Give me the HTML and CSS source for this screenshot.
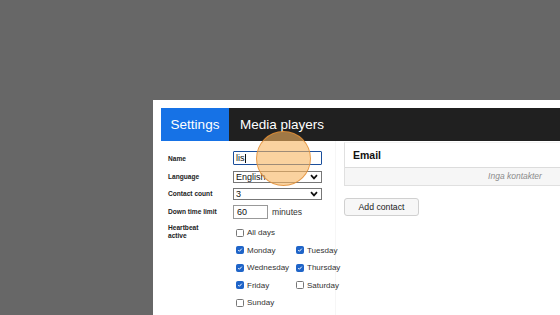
FILE: index.html
```html
<!DOCTYPE html>
<html lang="en">
<head>
  <meta charset="UTF-8" />
  <title>Media players</title>
  <link rel="stylesheet" href="styles.css">
</head>
<body>
  <div class="panel">
    <div class="topbar">
      <div class="tab tab-active">Settings</div>
      <div class="tab">Media players</div>
    </div>

    <div class="content">
      <form class="settings">
        <div class="row">
          <label for="name">Name</label>
          <div class="field focused">lis<span class="caret"></span></div>
        </div>
        <div class="row">
          <label for="language">Language</label>
          <select id="language" class="field">
            <option>English</option>
            <option>Svenska</option>
          </select>
        </div>
        <div class="row">
          <label for="count">Contact count</label>
          <select id="count" class="field">
            <option>3</option>
          </select>
        </div>
        <div class="row">
          <label for="downtime">Down time limit</label>
          <input type="text" id="downtime" class="field short" value="60">
          <span class="unit">minutes</span>
        </div>
        <div class="row row-top">
          <label>Heartbeat<br>active</label>
          <div class="days">
            <label class="day wide"><input type="checkbox"> All days</label>
            <label class="day"><input type="checkbox" checked> Monday</label>
            <label class="day"><input type="checkbox" checked> Tuesday</label>
            <label class="day"><input type="checkbox" checked> Wednesday</label>
            <label class="day"><input type="checkbox" checked> Thursday</label>
            <label class="day"><input type="checkbox" checked> Friday</label>
            <label class="day"><input type="checkbox"> Saturday</label>
            <label class="day"><input type="checkbox"> Sunday</label>
          </div>
        </div>
      </form>

      <div class="contacts">
        <div class="contacts-table">
          <div class="contacts-head">
            <div class="col-email">Email</div>
            <div>Aktiv</div>
          </div>
          <div class="contacts-empty">Inga kontakter</div>
        </div>
        <button type="button" class="add-btn">Add contact</button>
      </div>
    </div>

    <div class="touch"></div>
  </div>
</body>
</html>
```

FILE: styles.css
```css
body {
  margin: 0;
  background-color: #676767;
  font-family: "Liberation Sans", Arial, sans-serif;
  overflow: hidden;
  height: 315px;
}

.panel {
  position: relative;
  margin: 100px 0 0 153px;
  padding: 8px;
  width: 640px;
  height: 320px;
  background-color: #ffffff;
}

.topbar {
  display: flex;
  height: 33px;
  background-color: #202020;
}

.tab {
  display: flex;
  align-items: center;
  padding: 0 11px;
  color: #ffffff;
  font-size: 13.5px;
}

.tab-active {
  width: 68px;
  box-sizing: border-box;
  justify-content: center;
  padding: 0;
  background-color: #1672e6;
}

.content {
  display: flex;
  gap: 8px;
}

.settings {
  width: 175px;
  padding: 10px 0 0 7px;
  box-sizing: border-box;
  border-right: 1px solid #f6f6f6;
}

.row {
  display: flex;
  align-items: center;
  margin-bottom: 5px;
}

.row > label {
  width: 65px;
  flex-shrink: 0;
  font-size: 6.6px;
  font-weight: bold;
  color: #222;
  line-height: 8px;
}

.row-top {
  align-items: flex-start;
}

.field {
  box-sizing: border-box;
  width: 89px;
  height: 12px;
  padding: 0 3px;
  border: 1px solid #777;
  border-radius: 0;
  background-color: #fff;
  font-family: "Liberation Sans", Arial, sans-serif;
  font-size: 9px;
  color: #111;
  outline: none;
}

select.field {
  appearance: none;
  padding: 0 2px;
  background-image: url("data:image/svg+xml;utf8,<svg xmlns='http://www.w3.org/2000/svg' width='8' height='6' viewBox='0 0 8 6'><path d='M1 1.2 L4 4.4 L7 1.2' fill='none' stroke='%23111' stroke-width='1.7'/></svg>");
  background-repeat: no-repeat;
  background-position: right 3px center;
}

.focused {
  display: flex;
  align-items: center;
  height: 14px;
  margin-bottom: 1px;
  padding: 0 2px;
  border: 1.5px solid #1b4f9c;
  border-radius: 1px;
}

.caret {
  width: 1px;
  height: 9px;
  margin-left: 0;
  background-color: #111;
}

.short {
  width: 35px;
  height: 14px;
  border-color: #999;
}

.unit {
  margin-left: 4px;
  font-size: 8.6px;
  color: #333;
}

.days {
  display: grid;
  grid-template-columns: 60px auto;
  grid-auto-rows: 17.5px;
  margin-top: 0;
}

.day {
  display: flex;
  align-items: center;
  font-size: 8px;
  color: #333;
}

.day.wide {
  grid-column: 1 / 3;
}

.day input {
  appearance: none;
  box-sizing: border-box;
  width: 8px;
  height: 8px;
  margin: 0 3px 0 3px;
  border: 1px solid #777;
  border-radius: 1.5px;
  background-color: #fff;
}

.day input:checked {
  border-color: #1f64c8;
  background-color: #1f64c8;
  background-image: url("data:image/svg+xml;utf8,<svg xmlns='http://www.w3.org/2000/svg' width='8' height='8' viewBox='0 0 8 8'><path d='M1.6 4.1 L3.2 5.7 L6.4 2.2' fill='none' stroke='white' stroke-width='1.3'/></svg>");
  background-size: 100% 100%;
}

.contacts {
  padding-top: 1px;
}

.contacts-table {
  width: 340px;
  border: 1px solid #e0e0e0;
  border-top-color: #f4f4f4;
}

.contacts-head {
  display: flex;
  height: 24px;
  align-items: center;
  border-bottom: 1px solid #dcdcdc;
  font-size: 10.5px;
  font-weight: bold;
  color: #111;
}

.contacts-head div {
  padding-left: 8px;
}

.col-email {
  width: 200px;
}

.contacts-empty {
  height: 17px;
  line-height: 17px;
  background-color: #f6f6f6;
  text-align: center;
  font-size: 8.5px;
  font-style: italic;
  color: #8c8c8c;
}

.add-btn {
  margin-top: 12px;
  width: 75px;
  height: 18px;
  padding: 0;
  border: 1px solid #d0d0d0;
  border-radius: 3px;
  background-color: #f7f7f7;
  font-family: "Liberation Sans", Arial, sans-serif;
  font-size: 8.7px;
  color: #222;
}

.touch {
  position: absolute;
  left: 103px;
  top: 31px;
  width: 55px;
  height: 55px;
  box-sizing: border-box;
  border-radius: 50%;
  border: 1px solid rgba(225, 140, 50, 0.8);
  background-color: rgba(246, 180, 95, 0.6);
}
```
